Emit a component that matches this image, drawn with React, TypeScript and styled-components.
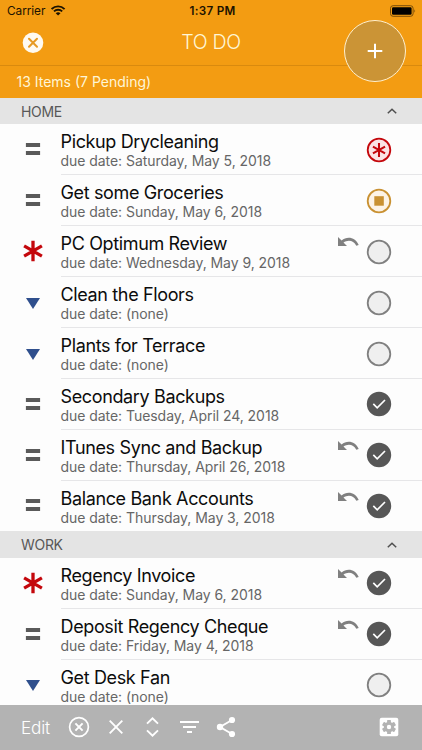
import React from "react";
import styled, { createGlobalStyle } from "styled-components";

const GlobalStyle = createGlobalStyle`
  * { box-sizing: border-box; }
  body { margin: 0; background: #fdfdfd; font-family: Inter, "Liberation Sans", sans-serif; overflow: hidden; }
  svg { display: block; flex: none; }
`;

const Screen = styled.div`
  width: 422px;
  height: 750px;
  display: flex;
  flex-direction: column;
  overflow: hidden;
  background: #fdfdfd;
`;
const Header = styled.header`
  position: relative;
  flex: none;
  height: 98px;
  background: #f39c12;
  color: #fff6d6;
`;
const StatusBar = styled.div`
  height: 21px;
  padding: 0 6px 0 7px;
  display: grid;
  grid-template-columns: 1fr auto 1fr;
  align-items: center;
  color: #1c1200;
  font-size: 11.8px;
`;
const Carrier = styled.div`
  display: flex;
  align-items: center;
  gap: 6px;
  letter-spacing: -0.05px;
`;
const Clock = styled.div`
  padding-left: 2px;
  font-weight: 600;
  font-size: 11.7px;
  letter-spacing: 0.3px;
`;
const Battery = styled.div`
  justify-self: end;
`;
const NavBar = styled.div`
  height: 45px;
  padding-left: 22px;
  display: grid;
  grid-template-columns: 22px 1fr 44px;
  align-items: center;
  border-bottom: 1px solid #d98a0e;
`;
const NavTitle = styled.h1`
  margin: 0;
  padding: 0 22px 2px;
  text-align: center;
  font-weight: 350;
  font-size: 19.6px;
  letter-spacing: -0.3px;
`;
const Summary = styled.div`
  height: 32px;
  padding-left: 16.5px;
  line-height: 32px;
  font-size: 14px;
`;
const AddButton = styled.button`
  position: absolute;
  left: 344px;
  top: 20px;
  width: 62px;
  height: 62px;
  padding: 0;
  border: 1.4px solid #fff0cf;
  border-radius: 50%;
  background: #cb9436;
  display: grid;
  place-items: center;
`;
const List = styled.main`
  flex: 1;
  min-height: 0;
  overflow: hidden;
`;
const SectionHeader = styled.h2`
  margin: 0;
  height: 26.4px;
  padding: 0 25px 0 21px;
  display: flex;
  align-items: center;
  justify-content: space-between;
  background: #e4e4e4;
  color: #585858;
  font-weight: 400;
  font-size: 14px;
  letter-spacing: -0.3px;
`;
const Row = styled.div`
  height: 50.89px;
  display: flex;
`;
const Priority = styled.div`
  width: 60.5px;
  padding: 0 0 1px 5px;
  display: grid;
  place-items: center;
`;
const RowBody = styled.div<{ $last: boolean }>`
  flex: 1;
  display: flex;
  border-bottom: 1px solid ${(p) => (p.$last ? "transparent" : "#e6e6e8")};
`;
const Texts = styled.div`
  flex: 1;
  padding-top: 6px;
  white-space: nowrap;
`;
const Name = styled.div`
  height: 23px;
  line-height: 23px;
  font-size: 18px;
  color: #0c0c0c;
  letter-spacing: -0.36px;
`;
const Due = styled.div`
  height: 16px;
  line-height: 16px;
  font-size: 14px;
  color: #666;
  letter-spacing: -0.05px;
`;
const Repeat = styled.div`
  width: 21px;
  padding-top: 11px;
  margin-right: 7px;
`;
const Status = styled.div`
  width: 26px;
  margin-right: 30px;
  padding-top: 1.4px;
  display: grid;
  place-items: center;
`;
const Toolbar = styled.footer`
  flex: none;
  height: 45px;
  padding: 0 23px 1px 21px;
  display: flex;
  align-items: center;
  background: #b3b3b3;
  color: #fff;
`;
const Edit = styled.span`
  width: 47px;
  font-size: 17.2px;
  font-weight: 350;
  letter-spacing: -0.2px;
`;
const Tool = styled.span<{ $gap?: number }>`
  display: flex;
  margin-right: ${(p) => p.$gap ?? 0}px;
`;
const Spacer = styled.span`
  flex: 1;
`;

type PriorityKind = "high" | "normal" | "low";
type StatusKind = "urgent" | "active" | "open" | "done";
type Task = { name: string; due: string; priority: PriorityKind; status: StatusKind; repeat?: boolean };

const sections: { title: string; tasks: Task[] }[] = [
  {
    title: "HOME",
    tasks: [
      { name: "Pickup Drycleaning", due: "Saturday, May 5, 2018", priority: "normal", status: "urgent" },
      { name: "Get some Groceries", due: "Sunday, May 6, 2018", priority: "normal", status: "active" },
      { name: "PC Optimum Review", due: "Wednesday, May 9, 2018", priority: "high", status: "open", repeat: true },
      { name: "Clean the Floors", due: "(none)", priority: "low", status: "open" },
      { name: "Plants for Terrace", due: "(none)", priority: "low", status: "open" },
      { name: "Secondary Backups", due: "Tuesday, April 24, 2018", priority: "normal", status: "done" },
      { name: "ITunes Sync and Backup", due: "Thursday, April 26, 2018", priority: "normal", status: "done", repeat: true },
      { name: "Balance Bank Accounts", due: "Thursday, May 3, 2018", priority: "normal", status: "done", repeat: true },
    ],
  },
  {
    title: "WORK",
    tasks: [
      { name: "Regency Invoice", due: "Sunday, May 6, 2018", priority: "high", status: "done", repeat: true },
      { name: "Deposit Regency Cheque", due: "Friday, May 4, 2018", priority: "normal", status: "done", repeat: true },
      { name: "Get Desk Fan", due: "(none)", priority: "low", status: "open" },
    ],
  },
];

const starPath = "M0-10.3V10.3M-8.9-5.1L8.9 5.1M-8.9 5.1L8.9-5.1";

function PriorityIcon({ kind }: { kind: PriorityKind }) {
  return (
    <svg width="22" height="22" viewBox="-11 -11 22 22">
      {kind === "high" && <path d={starPath} stroke="#c4070c" strokeWidth="3.3" fill="none" />}
      {kind === "normal" && <path d="M-7.1-4.1H7.1M-7.1 4H7.1" stroke="#5a5a5a" strokeWidth="4" />}
      {kind === "low" && <path d="M-7-4H7L0 7Z" fill="#2f4f8d" />}
    </svg>
  );
}

function StatusIcon({ kind }: { kind: StatusKind }) {
  const tone = {
    urgent: ["#c4070c", "#fbe3e4"],
    active: ["#c99132", "#fdf3e6"],
    open: ["#808080", "#efefef"],
    done: ["#575757", "#575757"],
  }[kind];
  return (
    <svg width="26" height="26" viewBox="-13 -13 26 26">
      <circle r="11.3" fill={tone[1]} stroke={tone[0]} strokeWidth="1.8" />
      {kind === "urgent" && <path d={starPath} transform="scale(.68)" stroke={tone[0]} strokeWidth="3" />}
      {kind === "active" && <rect x="-4.7" y="-4.8" width="9.5" height="9.5" fill={tone[0]} />}
      {kind === "done" && <path d="M-5.7-.1L-1.8 3.8L6-4" stroke="#fff" strokeWidth="1.7" fill="none" />}
    </svg>
  );
}

const RepeatIcon = () => (
  <svg width="21" height="12" viewBox="0 0 21 12">
    <path d="M0 0V9H9L5.5 5.6C9.5 2.6 15.5 2.8 18.3 8.8L20.7 8C17.3-.1 8.8-.9 3.6 3.6Z" fill="#808080" />
  </svg>
);

export default function App() {
  return (
    <Screen>
      <GlobalStyle />
      <Header>
        <StatusBar>
          <Carrier>
            Carrier
            <svg width="15" height="11" viewBox="0 0 15 11">
              <path d="M.6 4.1C4.4.5 9.8.5 13.6 4.1M3 6.4C5.3 4.2 8.9 4.2 11.2 6.4" fill="none" stroke="#1c1200" strokeWidth="1.9" />
              <path d="M7.1 10.5L4.7 8.2Q7.1 6.4 9.5 8.2Z" fill="#1c1200" />
            </svg>
          </Carrier>
          <Clock>1:37 PM</Clock>
          <Battery>
            <svg width="26" height="12" viewBox="0 0 26 12">
              <rect x=".5" y=".7" width="22.6" height="10.6" rx="2.6" fill="none" stroke="#7a4e09" />
              <rect x="2" y="2.2" width="19.6" height="7.6" rx="1.2" fill="#000" />
              <path d="M24.4 4.2Q26 6 24.4 7.8Z" fill="#7a4e09" />
            </svg>
          </Battery>
        </StatusBar>
        <NavBar>
          <svg width="22" height="22" viewBox="-11 -11 22 22">
            <circle r="10.3" cy="-.3" fill="#fffaf0" />
            <path d="M-4-4.3L4 3.7M4-4.3L-4 3.7" stroke="#e79a22" strokeWidth="2" strokeLinecap="round" />
          </svg>
          <NavTitle>TO DO</NavTitle>
        </NavBar>
        <Summary>13 Items (7 Pending)</Summary>
        <AddButton aria-label="Add">
          <svg width="16" height="16" viewBox="-8 -8 16 16">
            <path d="M-7.3 0H7.3M0-7.3V7.3" stroke="#fff" strokeWidth="2" />
          </svg>
        </AddButton>
      </Header>
      <List>
        {sections.map((s) => (
          <section key={s.title}>
            <SectionHeader>
              {s.title}
              <svg width="10" height="6" viewBox="0 0 10 6">
                <path d="M.8 5.3L5 1.2L9.2 5.3" fill="none" stroke="#505050" strokeWidth="1.5" />
              </svg>
            </SectionHeader>
            {s.tasks.map((t, i) => (
              <Row key={t.name}>
                <Priority>
                  <PriorityIcon kind={t.priority} />
                </Priority>
                <RowBody $last={i === s.tasks.length - 1}>
                  <Texts>
                    <Name>{t.name}</Name>
                    <Due>due date: {t.due}</Due>
                  </Texts>
                  <Repeat>{t.repeat && <RepeatIcon />}</Repeat>
                  <Status>
                    <StatusIcon kind={t.status} />
                  </Status>
                </RowBody>
              </Row>
            ))}
          </section>
        ))}
      </List>
      <Toolbar>
        <Edit>Edit</Edit>
        <Tool $gap={19}>
          <svg width="22" height="22" viewBox="-11 -11 22 22">
            <g fill="none" stroke="#fff">
              <circle r="9.4" strokeWidth="1.7" />
              <path d="M-3.6-3.6L3.6 3.6M3.6-3.6L-3.6 3.6" strokeWidth="2" />
            </g>
          </svg>
        </Tool>
        <Tool $gap={23}>
          <svg width="14" height="14" viewBox="0 0 14 14">
            <path d="M.7.7L13.3 13.3M13.3.7L.7 13.3" stroke="#fff" strokeWidth="1.9" />
          </svg>
        </Tool>
        <Tool $gap={21}>
          <svg width="13" height="20" viewBox="0 0 13 20">
            <path d="M1 6.6L6.5 1.3L12 6.6M1 13.4L6.5 18.7L12 13.4" fill="none" stroke="#fff" strokeWidth="1.9" />
          </svg>
        </Tool>
        <Tool $gap={17}>
          <svg width="19" height="14" viewBox="0 0 19 14">
            <path d="M0 2H19M3 7H16M7 12H12" stroke="#fff" strokeWidth="1.9" />
          </svg>
        </Tool>
        <Tool>
          <svg width="20" height="22" viewBox="0 0 20 22">
            <path d="M16 4L4 11L16 18" fill="none" stroke="#fff" strokeWidth="1.9" />
            <circle cx="16" cy="4" r="3.1" fill="#fff" />
            <circle cx="4" cy="11" r="3.2" fill="#fff" />
            <circle cx="16" cy="18" r="3.1" fill="#fff" />
          </svg>
        </Tool>
        <Spacer />
        <Tool>
          <svg width="20" height="20" viewBox="-10 -10 20 20">
            <rect x="-9.3" y="-9.3" width="18.6" height="18.6" rx="2" fill="#fff" />
            <g fill="#b3b3b3">
              <circle r="5.2" />
              {[0, 60, 120].map((a) => (
                <rect key={a} x="-1.9" y="-7" width="3.8" height="14" rx=".5" transform={`rotate(${a})`} />
              ))}
            </g>
            <circle r="2.2" fill="#fff" />
          </svg>
        </Tool>
      </Toolbar>
    </Screen>
  );
}
